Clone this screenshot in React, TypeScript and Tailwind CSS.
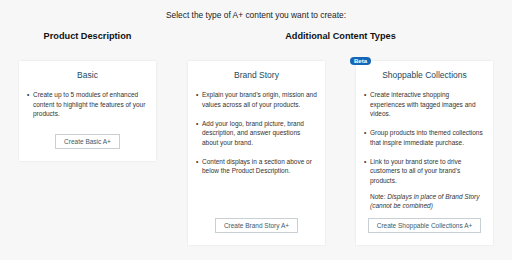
const cards = [
  {
    title: "Basic",
    bullets: ["Create up to 5 modules of enhanced content to highlight the features of your products."],
    button: "Create Basic A+",
  },
];

function Bullets({ items }: { items: string[] }) {
  return (
    <ul className="flex flex-col gap-[9.5px]">
      {items.map((t) => (
        <li key={t} className="flex gap-[3px]">
          <span className="w-[3px] shrink-0">•</span>
          <span>{t}</span>
        </li>
      ))}
    </ul>
  );
}

function Card({
  title,
  children,
  button,
  beta,
  tall,
}: {
  title: string;
  children: React.ReactNode;
  button: string;
  beta?: boolean;
  tall?: boolean;
}) {
  return (
    <div
      className={`relative flex w-[137px] flex-col bg-white px-[8px] pt-[7px] pb-[12px] shadow-[0_0_2px_rgba(0,0,0,0.1)] ${tall ? "h-[184px]" : "h-[100px]"}`}
    >
      {beta ? (
        <span className="absolute -top-[4px] -left-[6px] rounded-full bg-[#1467b8] px-[4px] text-[6px] leading-[8px] font-bold text-white">
          Beta
        </span>
      ) : null}
      <h3 className="text-center text-[8.5px] leading-[14px] text-[#1d4a5c]">{title}</h3>
      <div className="mt-[8px] text-[6.5px] leading-[9.5px] text-[#333]">{children}</div>
      <div className="mt-auto flex justify-center">
        <button
          type="button"
          className="h-[15px] border border-[#c9d0d4] bg-white px-[8px] text-[6.5px] leading-[13px] text-[#3d5a69]"
        >
          {button}
        </button>
      </div>
    </div>
  );
}

export default function App() {
  return (
    <div
      className="h-[260px] w-[512px] bg-[#f7f7f8] pt-[9px]"
      style={{ fontFamily: '"Liberation Sans", Arial, sans-serif' }}
    >
      <p className="text-center text-[8.4px] leading-[12px] text-[#222]">Select the type of A+ content you want to create:</p>
      <div className="mt-[8px] flex px-[19px]">
        <h2 className="w-[137px] text-center text-[9.2px] leading-[14px] font-bold text-[#111]">Product Description</h2>
        <h2 className="ml-[32px] w-[305px] text-center text-[9.2px] leading-[14px] font-bold text-[#111]">
          Additional Content Types
        </h2>
      </div>
      <div className="mt-[18px] flex items-start px-[19px]">
        <Card title={cards[0].title} button={cards[0].button}>
          <Bullets items={cards[0].bullets} />
        </Card>
        <div className="ml-[32px]">
          <Card title="Brand Story" button="Create Brand Story A+" tall>
            <Bullets
              items={[
                "Explain your brand’s origin, mission and values across all of your products.",
                "Add your logo, brand picture, brand description, and answer questions about your brand.",
                "Content displays in a section above or below the Product Description.",
              ]}
            />
          </Card>
        </div>
        <div className="ml-[31px]">
          <Card title="Shoppable Collections" button="Create Shoppable Collections A+" beta tall>
            <Bullets
              items={[
                "Create interactive shopping experiences with tagged images and videos.",
                "Group products into themed collections that inspire immediate purchase.",
                "Link to your brand store to drive customers to all of your brand’s products.",
              ]}
            />
            <p className="mt-[6.5px] pl-[6px]">
              Note: <i>Displays in place of Brand Story (cannot be combined)</i>
            </p>
          </Card>
        </div>
      </div>
    </div>
  );
}
